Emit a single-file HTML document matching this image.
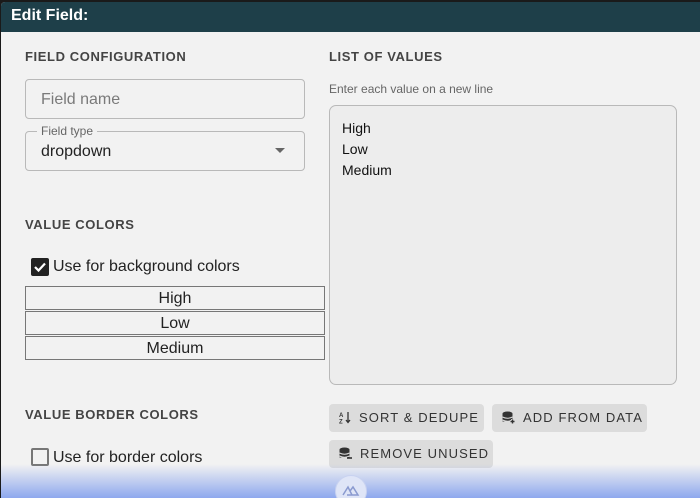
<!DOCTYPE html>
<html><head><meta charset="utf-8"><style>
*{box-sizing:border-box;margin:0;padding:0}
body{width:700px;height:498px;overflow:hidden;background:#1a1a1a;font-family:"Liberation Sans",sans-serif;position:relative}
.win{position:absolute;left:1px;top:2px;right:0;bottom:0;background:#f2f2f2;border-top-left-radius:4px;overflow:hidden}
.hdr{height:30px;background:#1e3f49;color:#fff;font-weight:bold;font-size:16px;padding:5px 0 0 10px}
.a{position:absolute}
.h{font-size:13px;font-weight:bold;color:#444;letter-spacing:.6px}
.inp{border:1px solid #b9b9b9;border-radius:4px;background:#f2f2f2}
.cb{width:18px;height:18px;border-radius:2px}
.row{position:absolute;left:24px;width:300px;height:24px;border:1px solid #777;text-align:center;font-size:16px;color:#222;line-height:24px;background:#f2f2f2}
.btn{position:absolute;height:28px;background:#dcdcdc;border-radius:4px;font-size:13px;letter-spacing:1.1px;color:#333;line-height:28px;padding-left:10px}
.btn svg{vertical-align:-2px;margin-right:8px}
.fade{position:absolute;left:0;right:0;top:462px;bottom:0;background:linear-gradient(#f2f2f200,#8ea8ee)}
</style></head><body>
<div class="win">
<div class="hdr">Edit Field:</div>
<div class="a h" style="left:24px;top:47px">FIELD CONFIGURATION</div>
<div class="a inp" style="left:24px;top:77px;width:280px;height:40px;font-size:16px;color:#7a7a7a;padding:11px 0 0 15px">Field name</div>
<div class="a inp" style="left:24px;top:129px;width:280px;height:40px;font-size:16px;color:#222;padding:11px 0 0 15px">dropdown</div>
<div class="a" style="left:36px;top:122px;background:#f2f2f2;padding:0 4px;font-size:12px;color:#666">Field type</div>
<svg class="a" style="left:274px;top:146px" width="12" height="6"><path d="M0 0h10L5 5z" fill="#666"/></svg>
<div class="a h" style="left:24px;top:215px">VALUE COLORS</div>
<div class="a cb" style="left:30px;top:256px;background:#222"><svg width="18" height="18"><path d="M4 9l3.5 3.5L14 5.5" stroke="#fff" stroke-width="2.2" fill="none"/></svg></div>
<div class="a" style="left:52px;top:256px;font-size:16px;color:#222">Use for background colors</div>
<div class="row" style="top:284px">High</div>
<div class="row" style="top:309px">Low</div>
<div class="row" style="top:334px">Medium</div>
<div class="a h" style="left:24px;top:405px">VALUE BORDER COLORS</div>
<div class="a cb" style="left:30px;top:446px;border:2px solid #777"></div>
<div class="a" style="left:52px;top:447px;font-size:16px;color:#222">Use for border colors</div>

<div class="a h" style="left:328px;top:47px">LIST OF VALUES</div>
<div class="a" style="left:328px;top:80px;font-size:12px;color:#666">Enter each value on a new line</div>
<div class="a inp" style="left:328px;top:103px;width:348px;height:280px;background:#ededed;border-radius:7px;font-size:14px;color:#111;line-height:21px;padding:12px 0 0 12px">High<br>Low<br>Medium</div>
<div class="btn" style="left:328px;top:402px;width:155px"><svg width="12" height="13"><text x="0" y="6" font-size="6" font-weight="bold" fill="#333">A</text><text x="0" y="12.5" font-size="6" font-weight="bold" fill="#333">Z</text><path d="M9 1v10M7 9l2 2.5L11 9" stroke="#333" stroke-width="1.3" fill="none"/></svg>SORT &amp; DEDUPE</div>
<div class="btn" style="left:491px;top:402px;width:155px"><svg width="13" height="13"><ellipse cx="5.5" cy="2.5" rx="5" ry="2" fill="#333"/><rect x=".5" y="2.5" width="10" height="8" fill="#333"/><path d="M.5 6q5 2.5 10 0M.5 9q5 2.5 10 0" stroke="#dcdcdc" fill="none"/><path d="M10.5 8v5M8 10.5h5" stroke="#dcdcdc" stroke-width="3"/><path d="M10.5 8.5v4M8.5 10.5h4" stroke="#333" stroke-width="1.4"/></svg>ADD FROM DATA</div>
<div class="btn" style="left:328px;top:438px;width:164px"><svg width="13" height="13"><ellipse cx="5.5" cy="2.5" rx="5" ry="2" fill="#333"/><rect x=".5" y="2.5" width="10" height="8" fill="#333"/><path d="M.5 6q5 2.5 10 0M.5 9q5 2.5 10 0" stroke="#dcdcdc" fill="none"/><path d="M8 11h5" stroke="#333" stroke-width="1.6"/></svg>REMOVE UNUSED</div>
<div class="fade"></div>
<div class="a" style="left:334px;top:473px;width:32px;height:32px;border-radius:50%;border:1px solid #c8d2f0;background:#dfe5f7"></div>
<svg class="a" style="left:341px;top:482px" width="20" height="12"><path d="M1 11L6 3l4 8M8 7l3-4 5 8H5" stroke="#8a9ad0" stroke-width="1.5" fill="none"/></svg>
</div>
</body></html>
